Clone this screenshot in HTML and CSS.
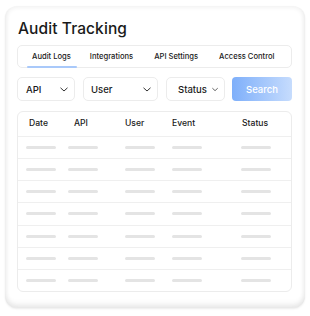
FILE: index.html
```html
<!DOCTYPE html>
<html>
<head>
<meta charset="utf-8">
<link rel="stylesheet" href="styles.css">
</head>
<body>
<div class="card">
  <h1 class="title">Audit Tracking</h1>
  <nav class="tabs">
    <span class="tab active">Audit Logs</span>
    <span class="tab">Integrations</span>
    <span class="tab">API Settings</span>
    <span class="tab">Access Control</span>
  </nav>
  <div class="filters">
    <div class="select s-api"><span>API</span><svg viewBox="0 0 8 5" class="chev"><path d="M0.5 0.8 L4 4 L7.5 0.8" /></svg></div>
    <div class="select s-user"><span>User</span><svg viewBox="0 0 8 5" class="chev"><path d="M0.5 0.8 L4 4 L7.5 0.8" /></svg></div>
    <div class="select s-status"><span>Status</span><svg viewBox="0 0 8 5" class="chev"><path d="M0.5 0.8 L4 4 L7.5 0.8" /></svg></div>
    <button class="search">Search</button>
  </div>
  <div class="table">
    <div class="row head">
      <span class="c1">Date</span><span class="c2">API</span><span class="c3">User</span><span class="c4">Event</span><span class="c5">Status</span>
    </div>
    <div class="row"><i></i><i></i><i></i><i></i><i></i></div>
    <div class="row"><i></i><i></i><i></i><i></i><i></i></div>
    <div class="row"><i></i><i></i><i></i><i></i><i></i></div>
    <div class="row"><i></i><i></i><i></i><i></i><i></i></div>
    <div class="row"><i></i><i></i><i></i><i></i><i></i></div>
    <div class="row"><i></i><i></i><i></i><i></i><i></i></div>
    <div class="row"><i></i><i></i><i></i><i></i><i></i></div>
  </div>
</div>
</body>
</html>
```
FILE: styles.css
```css
* { box-sizing: border-box; }
html, body { margin: 0; padding: 0; background: #fff; }
body {
  font-family: "Inter", "Liberation Sans", sans-serif;
  color: #1a1a1a;
  padding: 6px 5px;
}
.card {
  width: 300px;
  height: 302px;
  border-radius: 12px;
  background: #fff;
  box-shadow: inset 0 0 5px 1px rgba(0,0,0,0.07), inset 0 -5px 5px rgba(0,0,0,0.05), 0 1px 2px rgba(0,0,0,0.08);
  padding: 13px 13px 0 12px;
  display: flex;
  flex-direction: column;
}
.title {
  margin: 0 0 0 1px;
  font-size: 15.5px;
  font-weight: 500;
  line-height: 20px;
  letter-spacing: 0.1px;
}
.tabs {
  margin-top: 6px;
  height: 23px;
  border: 1px solid #ececec;
  border-radius: 5px;
  display: flex;
  align-items: center;
  font-size: 7.6px;
  font-weight: 500;
  padding-left: 14px;
  white-space: nowrap;
}
.tab { position: relative; flex-shrink: 0; margin-right: 19px; }
.tab:nth-child(2) { margin-right: 21px; }
.tab:nth-child(3) { margin-right: 21px; }
.tab.active::after {
  content: "";
  position: absolute;
  left: -5px; right: -6px;
  bottom: -7px;
  height: 2px;
  border-radius: 1px;
  background: #a9c9fa;
}
.filters {
  margin-top: 9px;
  display: flex;
  height: 24px;
}
.select {
  border: 1px solid #ececec;
  border-radius: 5px;
  display: flex;
  align-items: center;
  justify-content: space-between;
  font-size: 9.5px;
  font-weight: 500;
  padding: 1px 6px 0 8px;
  margin-right: 8px;
}
.s-api { width: 58px; }
.s-user { width: 75px; padding-left: 7px; }
.s-status { width: 59px; padding-left: 11px; justify-content: flex-start; }
.s-status .chev { margin-left: 5px; }
.chev { width: 8px; height: 5px; fill: none; stroke: #333; stroke-width: 1; }
.search {
  width: 60px;
  margin-left: -1px;
  border: none;
  border-radius: 4px;
  background: linear-gradient(90deg, #7eaffa, #c6dcfd);
  color: #fff;
  font-family: inherit;
  font-size: 9.5px;
  font-weight: 500;
  padding: 0;
}
.table {
  margin-top: 10px;
  width: 275px;
  height: 181px;
  border: 1px solid #ececec;
  border-radius: 6px;
  display: flex;
  flex-direction: column;
}
.row {
  flex: 1;
  display: grid;
  grid-template-columns: 42px 57px 47px 69px 1fr;
  padding-left: 8px;
  align-items: center;
  border-top: 1px solid #efefef;
}
.row.head {
  flex: 0 0 24px;
  border-top: none;
  font-size: 8.6px;
  font-weight: 500;
  padding-bottom: 2px;
}
.head .c1 { padding-left: 3px; }
.head .c2 { padding-left: 6px; }
.head .c5 { padding-left: 1px; }
.row i {
  display: block;
  width: 30px;
  height: 3px;
  border-radius: 2px;
  background: #e4e4e4;
}
```
